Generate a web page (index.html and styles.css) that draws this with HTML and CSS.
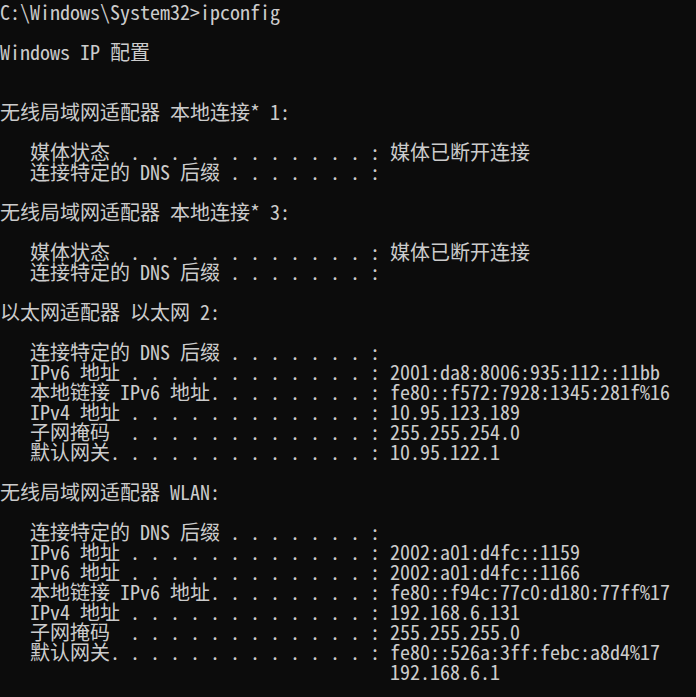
FILE: index.html
```html
<!DOCTYPE html>
<html lang="zh-CN">
<head>
<meta charset="utf-8">
<title>ipconfig</title>
<link rel="stylesheet" href="styles.css">
</head>
<body>
<pre class="console">C:\Windows\System32&gt;ipconfig

Windows IP 配置


无线局域网适配器 本地连接* 1:

   媒体状态  . . . . . . . . . . . . : 媒体已断开连接
   连接特定的 DNS 后缀 . . . . . . . :

无线局域网适配器 本地连接* 3:

   媒体状态  . . . . . . . . . . . . : 媒体已断开连接
   连接特定的 DNS 后缀 . . . . . . . :

以太网适配器 以太网 2:

   连接特定的 DNS 后缀 . . . . . . . :
   IPv6 地址 . . . . . . . . . . . . : 2001:da8:8006:935:112::11bb
   本地链接 IPv6 地址. . . . . . . . : fe80::f572:7928:1345:281f%16
   IPv4 地址 . . . . . . . . . . . . : 10.95.123.189
   子网掩码  . . . . . . . . . . . . : 255.255.254.0
   默认网关. . . . . . . . . . . . . : 10.95.122.1

无线局域网适配器 WLAN:

   连接特定的 DNS 后缀 . . . . . . . :
   IPv6 地址 . . . . . . . . . . . . : 2002:a01:d4fc::1159
   IPv6 地址 . . . . . . . . . . . . : 2002:a01:d4fc::1166
   本地链接 IPv6 地址. . . . . . . . : fe80::f94c:77c0:d180:77ff%17
   IPv4 地址 . . . . . . . . . . . . : 192.168.6.131
   子网掩码  . . . . . . . . . . . . : 255.255.255.0
   默认网关. . . . . . . . . . . . . : fe80::526a:3ff:febc:a8d4%17
                                       192.168.6.1</pre>
</body>
</html>
```
FILE: styles.css
```css
html, body {
  margin: 0;
  padding: 0;
  background: #0c0c0c;
  height: 100%;
  overflow: hidden;
}
.console {
  margin: 0;
  padding: 2px 0 0 0;
  color: #cccccc;
  font-family: "Noto Sans Mono CJK SC", "Liberation Mono", monospace;
  font-size: 20px;
  line-height: 20px;
  white-space: pre;
}
```
